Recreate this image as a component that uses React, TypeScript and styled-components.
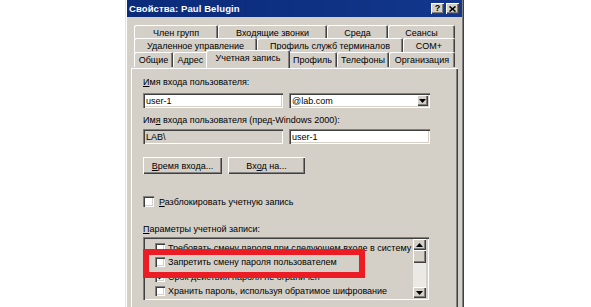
import React from "react";
import styled, { createGlobalStyle, css } from "styled-components";

const Global = createGlobalStyle`
  html, body { margin: 0; padding: 0; background: #ffffff; }
  body { font-family: "Liberation Sans", Arial, sans-serif; color: #000; }
`;

const FACE = "#d4d0c8";

const Page = styled.div`
  width: 591px;
  height: 307px;
  overflow: hidden;
  background: #fff;
  display: flex;
  align-items: flex-start;
  padding-left: 125px;
  box-sizing: border-box;
`;

const Dialog = styled.div`
  width: 339px;
  height: 330px;
  flex: 0 0 auto;
  box-sizing: border-box;
  background: ${FACE};
  padding: 0 2px;
  box-shadow: inset 1px 0 #e4e2dc, inset 2px 0 #ffffff, inset -1px 0 #404040,
    inset -2px 0 #808080;
  display: flex;
  flex-direction: column;
`;

const TitleBar = styled.div`
  height: 17px;
  flex: 0 0 17px;
  background: linear-gradient(90deg, #0b2a7a 0%, #12378c 100%);
  display: flex;
  align-items: center;
  padding: 0 3px 0 2px;
`;

const TitleText = styled.div`
  flex: 1;
  color: #fff;
  font-weight: bold;
  font-size: 9.5px;
  letter-spacing: 0.1px;
  white-space: nowrap;
`;

const TitleButtons = styled.div`
  display: flex;
  gap: 2px;
`;

const TitleButton = styled.div`
  width: 13px;
  height: 11px;
  box-sizing: border-box;
  background: ${FACE};
  box-shadow: inset 1px 1px #fff, inset -1px -1px #404040, inset -2px -2px #808080;
  display: flex;
  align-items: center;
  justify-content: center;
  font-size: 9px;
  font-weight: bold;
  line-height: 1;
`;

const Body = styled.div`
  flex: 1;
  padding: 8px 4px 0;
  display: flex;
  flex-direction: column;
`;

const TabRows = styled.div`
  display: flex;
  flex-direction: column;
  padding: 0 3px;
`;

const TabRow = styled.div<{ $h: number }>`
  display: flex;
  height: ${(p) => p.$h}px;
  align-items: flex-start;
`;

const Tab = styled.div<{ $w: number; $active?: boolean; $h: number }>`
  flex: 0 0 ${(p) => p.$w}px;
  height: ${(p) => p.$h}px;
  box-sizing: border-box;
  background: ${FACE};
  display: flex;
  align-items: center;
  justify-content: center;
  font-size: 9px;
  white-space: nowrap;
  border-radius: 2px 2px 0 0;
  box-shadow: inset 1px 1px #ffffff, inset -1px 0 #404040, inset -2px 0 #808080;
  padding-top: 1px;
  ${(p) =>
    p.$active &&
    css`
      flex-basis: ${p.$w + 4}px;
      margin: -2px -2px -1px -2px;
      height: ${p.$h + 3}px;
      position: relative;
      z-index: 2;
      padding-top: 0;
      padding-bottom: 2px;
    `}
`;

const Panel = styled.div`
  flex: 1;
  background: ${FACE};
  box-shadow: inset 1px 1px #ffffff, inset -1px -1px #404040, inset -2px -2px #808080;
  padding: 9px 0 0 12px;
  display: flex;
  flex-direction: column;
  align-items: flex-start;
`;

const Label = styled.div<{ $mt: number }>`
  margin-top: ${(p) => p.$mt}px;
  height: 11px;
  line-height: 11px;
  font-size: 9px;
  white-space: nowrap;
`;

const Row = styled.div<{ $mt: number; $gap: number }>`
  margin-top: ${(p) => p.$mt}px;
  display: flex;
  gap: ${(p) => p.$gap}px;
  align-items: center;
`;

const sunken = css`
  box-shadow: inset 1px 1px #808080, inset 2px 2px #404040, inset -1px -1px #ffffff,
    inset -2px -2px ${FACE};
`;

const Field = styled.div<{ $w: number; $disabled?: boolean }>`
  width: ${(p) => p.$w}px;
  height: 15px;
  box-sizing: border-box;
  background: ${(p) => (p.$disabled ? FACE : "#ffffff")};
  ${sunken};
  display: flex;
  align-items: center;
  padding: 0 2px 0 3px;
  font-size: 9px;
  white-space: nowrap;
`;

const FieldText = styled.span`
  flex: 1;
`;

const DropButton = styled.div`
  width: 11px;
  height: 11px;
  box-sizing: border-box;
  background: ${FACE};
  box-shadow: inset 1px 1px #fff, inset -1px -1px #404040, inset -2px -2px #808080;
  display: flex;
  align-items: center;
  justify-content: center;
`;

const Button = styled.div<{ $w: number }>`
  width: ${(p) => p.$w}px;
  height: 17px;
  box-sizing: border-box;
  background: ${FACE};
  box-shadow: inset 1px 1px #ffffff, inset -1px -1px #404040, inset -2px -2px #808080;
  display: flex;
  align-items: center;
  justify-content: center;
  font-size: 9px;
  white-space: nowrap;
`;

const CheckRow = styled.div<{ $mt?: number }>`
  margin-top: ${(p) => p.$mt ?? 0}px;
  height: 11px;
  display: flex;
  align-items: center;
  gap: 5px;
  font-size: 9px;
  white-space: nowrap;
`;

const CheckBox = styled.div<{ $size: number }>`
  width: ${(p) => p.$size}px;
  height: ${(p) => p.$size}px;
  box-sizing: border-box;
  background: #fff;
  ${sunken};
  display: flex;
  align-items: center;
  justify-content: center;
  flex: 0 0 auto;
`;

const U = styled.span`
  text-decoration: underline;
`;

const ListBox = styled.div`
  margin-top: 2px;
  width: 286px;
  height: 63px;
  box-sizing: border-box;
  background: ${FACE};
  ${sunken};
  padding: 2px;
  display: flex;
  position: relative;
`;

const ListItems = styled.div`
  flex: 1;
  display: flex;
  flex-direction: column;
  padding: 1.5px 0 0 10px;
  overflow: hidden;
`;

const ListItem = styled.div`
  height: 14.5px;
  flex: 0 0 14.5px;
  display: flex;
  align-items: center;
  gap: 3px;
  font-size: 9px;
  white-space: nowrap;
`;

const ScrollBar = styled.div`
  width: 13px;
  display: flex;
  flex-direction: column;
  background: #ebe9e5;
  margin-right: 1px;
`;

const ScrollBtn = styled.div<{ $h: number }>`
  height: ${(p) => p.$h}px;
  flex: 0 0 ${(p) => p.$h}px;
  box-sizing: border-box;
  background: ${FACE};
  box-shadow: inset 1px 1px #ffffff, inset -1px -1px #404040, inset -2px -2px #808080;
  display: flex;
  align-items: center;
  justify-content: center;
`;

const ScrollTrack = styled.div`
  flex: 1;
`;

const Highlight = styled.div`
  position: absolute;
  left: 0;
  top: 12px;
  width: 222px;
  height: 29px;
  box-sizing: border-box;
  border: 6.5px solid #ec1c24;
  pointer-events: none;
`;

const Arrow = ({ up }: { up?: boolean }) => (
  <svg width="7" height="4" viewBox="0 0 7 4">
    <polygon points={up ? "3.5,0 7,4 0,4" : "0,0 7,0 3.5,4"} fill="#000" />
  </svg>
);

const Check = () => (
  <svg width="7" height="7" viewBox="0 0 7 7">
    <polyline points="0.5,3.5 2.5,5.5 6.5,1.2" fill="none" stroke="#000" strokeWidth="1.5" />
  </svg>
);

const rows: { label: string; w: number; active?: boolean }[][] = [
  [
    { label: "Член групп", w: 84 },
    { label: "Входящие звонки", w: 109 },
    { label: "Среда", w: 61 },
    { label: "Сеансы", w: 67 },
  ],
  [
    { label: "Удаленное управление", w: 123 },
    { label: "Профиль служб терминалов", w: 146 },
    { label: "COM+", w: 52 },
  ],
  [
    { label: "Общие", w: 39 },
    { label: "Адрес", w: 35 },
    { label: "Учетная запись", w: 80, active: true },
    { label: "Профиль", w: 49 },
    { label: "Телефоны", w: 52 },
    { label: "Организация", w: 66 },
  ],
];

const rowHeights = [13, 14, 16];
const tabHeights = [14, 15, 15];

const options = [
  { text: "Требовать смену пароля при следующем входе в систему", checked: false },
  { text: "Запретить смену пароля пользователем", checked: false },
  { text: "Срок действия пароля не ограничен", checked: true },
  { text: "Хранить пароль, используя обратимое шифрование", checked: false },
];

export default function App() {
  return (
    <>
      <Global />
      <Page>
        <Dialog>
          <TitleBar>
            <TitleText>Свойства: Paul Belugin</TitleText>
            <TitleButtons>
              <TitleButton>?</TitleButton>
              <TitleButton>
                <svg width="7" height="6" viewBox="0 0 7 6">
                  <path d="M0.5 0.5 L6.5 5.5 M6.5 0.5 L0.5 5.5" stroke="#000" strokeWidth="1.6" />
                </svg>
              </TitleButton>
            </TitleButtons>
          </TitleBar>
          <Body>
            <TabRows>
              {rows.map((r, i) => (
                <TabRow key={i} $h={rowHeights[i]}>
                  {r.map((t) => (
                    <Tab key={t.label} $w={t.w} $h={tabHeights[i]} $active={t.active}>
                      {t.label}
                    </Tab>
                  ))}
                </TabRow>
              ))}
            </TabRows>
            <Panel>
              <Label $mt={0}>
                <U>И</U>мя входа пользователя:
              </Label>
              <Row $mt={5} $gap={6}>
                <Field $w={140}>
                  <FieldText>user-1</FieldText>
                </Field>
                <Field $w={141}>
                  <FieldText>@lab.com</FieldText>
                  <DropButton>
                    <Arrow />
                  </DropButton>
                </Field>
              </Row>
              <Label $mt={7}>
                Им<U>я</U> входа пользователя (пред-Windows 2000):
              </Label>
              <Row $mt={3} $gap={6}>
                <Field $w={140} $disabled>
                  <FieldText>LAB\</FieldText>
                </Field>
                <Field $w={141}>
                  <FieldText>user-1</FieldText>
                </Field>
              </Row>
              <Row $mt={13} $gap={6}>
                <Button $w={79}>
                  <span>
                    <U>В</U>ремя входа...
                  </span>
                </Button>
                <Button $w={77}>
                  <span>
                    Вх<U>о</U>д на...
                  </span>
                </Button>
              </Row>
              <CheckRow $mt={22}>
                <CheckBox $size={11} />
                <span>
                  <U>Р</U>азблокировать учетную запись
                </span>
              </CheckRow>
              <Label $mt={17}>
                <U>П</U>араметры учетной записи:
              </Label>
              <ListBox>
                <ListItems>
                  {options.map((o) => (
                    <ListItem key={o.text}>
                      <CheckBox $size={10}>{o.checked && <Check />}</CheckBox>
                      <span>{o.text}</span>
                    </ListItem>
                  ))}
                </ListItems>
                <ScrollBar>
                  <ScrollBtn $h={11}>
                    <Arrow up />
                  </ScrollBtn>
                  <ScrollBtn $h={13} />
                  <ScrollTrack />
                  <ScrollBtn $h={11}>
                    <Arrow />
                  </ScrollBtn>
                </ScrollBar>
                <Highlight />
              </ListBox>
            </Panel>
          </Body>
        </Dialog>
      </Page>
    </>
  );
}
